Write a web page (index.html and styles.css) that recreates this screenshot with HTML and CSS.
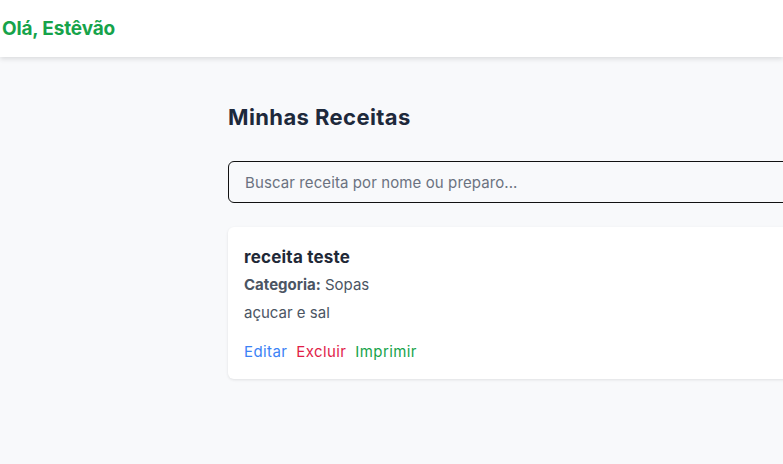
FILE: index.html
```html
<!DOCTYPE html>
<html lang="pt-BR">
<head>
<meta charset="utf-8">
<title>Minhas Receitas</title>
<link rel="stylesheet" href="styles.css">
</head>
<body>
<header class="topbar">
  <span class="greeting">Olá, Estêvão</span>
</header>
<main class="container">
  <h1 class="page-title">Minhas Receitas</h1>
  <input class="search" type="text" placeholder="Buscar receita por nome ou preparo...">
  <article class="card">
    <h2 class="card-title">receita teste</h2>
    <p class="card-cat"><strong>Categoria:</strong> Sopas</p>
    <p class="card-desc">açucar e sal</p>
    <div class="actions">
      <a class="act act-edit" href="#">Editar</a>
      <a class="act act-del" href="#">Excluir</a>
      <a class="act act-print" href="#">Imprimir</a>
    </div>
  </article>
</main>
</body>
</html>
```

FILE: styles.css
```css
* { box-sizing: border-box; }
html, body { margin: 0; padding: 0; }
body {
  background: #f8f9fb;
  font-family: Inter, "Noto Sans", sans-serif;
  color: #1f2937;
  overflow: hidden;
  width: 783px;
  height: 464px;
}
.topbar {
  height: 57px;
  background: #fff;
  box-shadow: 0 2px 5px rgba(0,0,0,0.12);
  display: flex;
  align-items: center;
  padding-left: 2px;
  position: relative;
}
.greeting {
  color: #16a34a;
  font-weight: 700;
  font-size: 19px;
  letter-spacing: -0.15px;
}
.container {
  margin-left: 228px;
  width: 760px;
  padding-top: 44px;
}
.page-title {
  margin: 0;
  font-size: 22px;
  font-weight: 700;
  color: #1e293b;
  letter-spacing: 0.4px;
  line-height: 32px;
}
.search {
  display: block;
  width: 100%;
  height: 42px;
  margin-top: 28px;
  border: 1px solid #111;
  border-radius: 6px;
  background: transparent;
  padding: 0 16px;
  font-family: inherit;
  font-size: 15px;
  letter-spacing: 0.1px;
  color: #374151;
  outline: none;
}
.search::placeholder { color: #6b7280; }
.card {
  margin-top: 24px;
  background: #fff;
  border-radius: 6px;
  box-shadow: 0 1px 3px rgba(0,0,0,0.1);
  padding: 18px 16px 16px;
  height: 152px;
}
.card-title {
  margin: 0;
  font-size: 17px;
  font-weight: 700;
  color: #1f2937;
  line-height: 24px;
  letter-spacing: 0.2px;
}
.card-cat, .card-desc {
  margin: 4px 0 0;
  font-size: 15px;
  line-height: 24px;
  color: #4b5563;
}
.card-cat strong { font-weight: 700; color: #4b5563; }
.actions {
  margin-top: 15px;
  display: flex;
  gap: 9px;
  font-size: 15px;
  line-height: 24px;
}
.act { text-decoration: none; letter-spacing: 0.4px; }
.act-edit { color: #3b82f6; }
.act-del { color: #e11d48; }
.act-print { color: #16a34a; }
```
